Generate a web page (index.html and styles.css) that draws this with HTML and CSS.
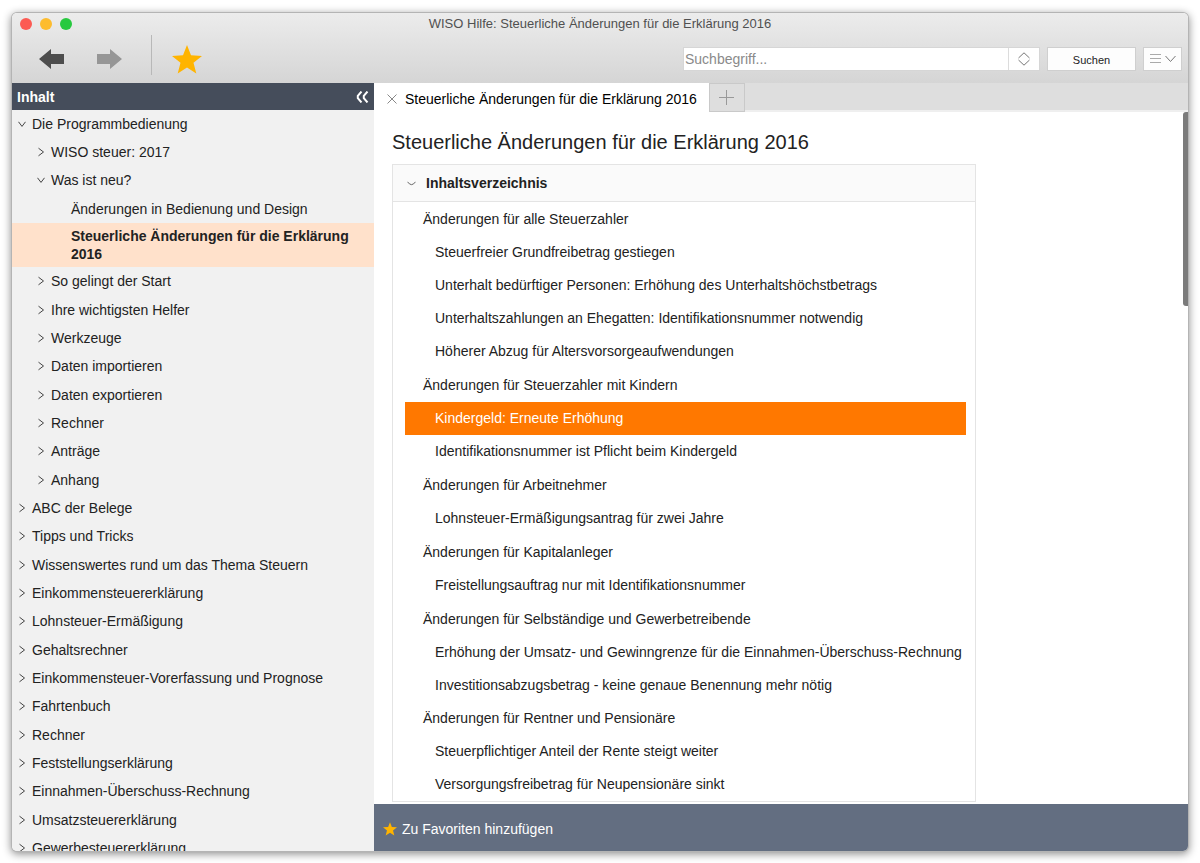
FILE: index.html
```
<!DOCTYPE html>
<html lang="de">
<head>
<meta charset="utf-8">
<title>WISO Hilfe: Steuerliche Änderungen für die Erklärung 2016</title>
<link rel="stylesheet" href="styles.css">
</head>
<body>
<svg class="defs" aria-hidden="true">
  <symbol id="right" viewBox="0 0 8 10"><path d="M1.5 1.2 6.5 5 1.5 8.8" fill="none" stroke="currentColor"/></symbol>
  <symbol id="down" viewBox="0 0 8 10"><path d="M.5 2.8 4 7.4 7.5 2.8" fill="none" stroke="currentColor"/></symbol>
  <symbol id="star" viewBox="0 0 30 29"><path d="M15 0 19 10.300 30 11 21.500 17.800 24.300 28.500 15 22.600 5.700 28.500 8.500 17.800 0 11 11 10.300Z" fill="#ffb400"/></symbol>
</svg>
<div class="window">
  <header class="chrome">
    <div class="titlebar">
      <div class="lights"><span class="light close"></span><span class="light minimize"></span><span class="light zoom"></span></div>
      <div class="title">WISO Hilfe: Steuerliche Änderungen für die Erklärung 2016</div>
    </div>
    <div class="toolbar">
      <button class="tool back" aria-label="Zurück"><svg width="25" height="20" viewBox="0 0 25 20"><path d="M0 10 12 0V5H25V15H12V20Z" fill="#4d4d4d"/></svg></button>
      <button class="tool forward" aria-label="Vorwärts"><svg width="25" height="20" viewBox="0 0 25 20"><path d="M25 10 13 0V5H0V15H13V20Z" fill="#969696"/></svg></button>
      <span class="divider"></span>
      <button class="tool favorite" aria-label="Favoriten"><svg width="30" height="29"><use href="#star"/></svg></button>
      <form class="search">
        <div class="field">
          <input type="text" placeholder="Suchbegriff..." aria-label="Suchbegriff">
          <button type="button" class="stepper" aria-label="Treffer wechseln"><svg width="12" height="14" viewBox="0 0 12 14"><path d="M.5 6 6 .8 11.500 6M.5 8 6 13.200 11.500 8" fill="none" stroke="#777"/></svg></button>
        </div>
        <button type="button" class="submit">Suchen</button>
        <button type="button" class="options" aria-label="Optionen"><svg width="26" height="12" viewBox="0 0 26 12"><path d="M0 1.500H11M0 5.500H11M0 9.500H11" stroke="#aaa" fill="none"/><path d="M15.500 3 20.500 8.500 25.500 3" stroke="#777" fill="none"/></svg></button>
      </form>
    </div>
  </header>
  <div class="body">
    <nav class="sidebar" aria-label="Inhalt">
      <div class="sidebar-head"><span>Inhalt</span><button aria-label="Einklappen"><svg width="13" height="12" viewBox="0 0 13 12"><path d="M5.500 .5 1.800 4.800V7.200L5.500 11.500M11.500 .5 7.800 4.800V7.200L11.500 11.500" fill="none" stroke="#fff" stroke-width="2"/></svg></button></div>
      <ul class="tree">
        <li><a href="#"><svg><use href="#down"/></svg>Die Programmbedienung</a></li>
        <li class="sub"><a href="#"><svg><use href="#right"/></svg>WISO steuer: 2017</a></li>
        <li class="sub"><a href="#"><svg><use href="#down"/></svg>Was ist neu?</a></li>
        <li class="leaf"><a href="#">Änderungen in Bedienung und Design</a></li>
        <li class="leaf selected"><a href="#">Steuerliche Änderungen für die Erklärung 2016</a></li>
        <li class="sub"><a href="#"><svg><use href="#right"/></svg>So gelingt der Start</a></li>
        <li class="sub"><a href="#"><svg><use href="#right"/></svg>Ihre wichtigsten Helfer</a></li>
        <li class="sub"><a href="#"><svg><use href="#right"/></svg>Werkzeuge</a></li>
        <li class="sub"><a href="#"><svg><use href="#right"/></svg>Daten importieren</a></li>
        <li class="sub"><a href="#"><svg><use href="#right"/></svg>Daten exportieren</a></li>
        <li class="sub"><a href="#"><svg><use href="#right"/></svg>Rechner</a></li>
        <li class="sub"><a href="#"><svg><use href="#right"/></svg>Anträge</a></li>
        <li class="sub"><a href="#"><svg><use href="#right"/></svg>Anhang</a></li>
        <li><a href="#"><svg><use href="#right"/></svg>ABC der Belege</a></li>
        <li><a href="#"><svg><use href="#right"/></svg>Tipps und Tricks</a></li>
        <li><a href="#"><svg><use href="#right"/></svg>Wissenswertes rund um das Thema Steuern</a></li>
        <li><a href="#"><svg><use href="#right"/></svg>Einkommensteuererklärung</a></li>
        <li><a href="#"><svg><use href="#right"/></svg>Lohnsteuer-Ermäßigung</a></li>
        <li><a href="#"><svg><use href="#right"/></svg>Gehaltsrechner</a></li>
        <li><a href="#"><svg><use href="#right"/></svg>Einkommensteuer-Vorerfassung und Prognose</a></li>
        <li><a href="#"><svg><use href="#right"/></svg>Fahrtenbuch</a></li>
        <li><a href="#"><svg><use href="#right"/></svg>Rechner</a></li>
        <li><a href="#"><svg><use href="#right"/></svg>Feststellungserklärung</a></li>
        <li><a href="#"><svg><use href="#right"/></svg>Einnahmen-Überschuss-Rechnung</a></li>
        <li><a href="#"><svg><use href="#right"/></svg>Umsatzsteuererklärung</a></li>
        <li><a href="#"><svg><use href="#right"/></svg>Gewerbesteuererklärung</a></li>
      </ul>
    </nav>
    <main class="main">
      <div class="tabs">
        <div class="tab"><button aria-label="Tab schließen"><svg width="10" height="10" viewBox="0 0 10 10"><path d="M.5 .5 9.500 9.500M9.500 .5 .5 9.500" stroke="#888"/></svg></button><span>Steuerliche Änderungen für die Erklärung 2016</span></div>
        <button class="add" aria-label="Neuer Tab"><svg width="15" height="15" viewBox="0 0 15 15"><path d="M7.500 0V15M0 7.500H15" stroke="#999"/></svg></button>
        <div class="tabs-rest"></div>
      </div>
      <div class="page">
        <article class="article">
          <h1>Steuerliche Änderungen für die Erklärung 2016</h1>
          <section class="toc">
            <h2><svg width="9" height="5" viewBox="0 0 9 5"><path d="M.5 .8Q4.500 6.500 8.500 .8" fill="none" stroke="#666"/></svg>Inhaltsverzeichnis</h2>
            <ul class="groups">
              <li><a href="#">Änderungen für alle Steuerzahler</a>
                <ul>
                  <li><a href="#">Steuerfreier Grundfreibetrag gestiegen</a></li>
                  <li><a href="#">Unterhalt bedürftiger Personen: Erhöhung des Unterhaltshöchstbetrags</a></li>
                  <li><a href="#">Unterhaltszahlungen an Ehegatten: Identifikationsnummer notwendig</a></li>
                  <li><a href="#">Höherer Abzug für Altersvorsorgeaufwendungen</a></li>
                </ul></li>
              <li><a href="#">Änderungen für Steuerzahler mit Kindern</a>
                <ul>
                  <li><a href="#" class="active">Kindergeld: Erneute Erhöhung</a></li>
                  <li><a href="#">Identifikationsnummer ist Pflicht beim Kindergeld</a></li>
                </ul></li>
              <li><a href="#">Änderungen für Arbeitnehmer</a>
                <ul><li><a href="#">Lohnsteuer-Ermäßigungsantrag für zwei Jahre</a></li></ul></li>
              <li><a href="#">Änderungen für Kapitalanleger</a>
                <ul><li><a href="#">Freistellungsauftrag nur mit Identifikationsnummer</a></li></ul></li>
              <li><a href="#">Änderungen für Selbständige und Gewerbetreibende</a>
                <ul>
                  <li><a href="#">Erhöhung der Umsatz- und Gewinngrenze für die Einnahmen-Überschuss-Rechnung</a></li>
                  <li><a href="#">Investitionsabzugsbetrag - keine genaue Benennung mehr nötig</a></li>
                </ul></li>
              <li><a href="#">Änderungen für Rentner und Pensionäre</a>
                <ul>
                  <li><a href="#">Steuerpflichtiger Anteil der Rente steigt weiter</a></li>
                  <li><a href="#">Versorgungsfreibetrag für Neupensionäre sinkt</a></li>
                </ul></li>
            </ul>
          </section>
        </article>
        <div class="scroll"><div class="thumb"></div></div>
      </div>
      <footer class="footer"><button><svg width="14" height="14"><use href="#star"/></svg>Zu Favoriten hinzufügen</button></footer>
    </main>
  </div>
</div>
</body>
</html>
```
FILE: styles.css
```
* { box-sizing: border-box; }
body {
  margin: 0;
  padding: 13px 12px 12px;
  height: 100vh;
  background: #fff;
  color: #222;
  font: 14px/18px "Liberation Sans", Arial, sans-serif;
}
button {
  font: inherit;
  color: inherit;
  background: none;
  border: 0;
  padding: 0;
  display: flex;
  align-items: center;
  justify-content: center;
}
a { color: inherit; text-decoration: none; }
ul { list-style: none; margin: 0; padding: 0; }
svg { display: block; flex: none; }
.defs { position: absolute; width: 0; height: 0; }

.window {
  height: 100%;
  display: flex;
  flex-direction: column;
  overflow: hidden;
  border-radius: 5px;
  background: #fff;
  box-shadow: 0 0 0 1px #b4b4b4, 0 2px 8px 1px rgba(0, 0, 0, .45);
}
.chrome {
  flex: none;
  height: 70px;
  background: linear-gradient(#ececec, #d5d5d5);
}
.titlebar { display: grid; grid-template-columns: 1fr auto 1fr; align-items: center; height: 22px; }
.lights { display: flex; gap: 8px; padding-left: 8px; }
.light { width: 12px; height: 12px; border-radius: 50%; }
.close { background: #fc5b53; }
.minimize { background: #fdbc2e; }
.zoom { background: #27c93f; }
.title { color: #505050; font-size: 13px; }
.toolbar { display: flex; align-items: center; height: 48px; padding: 0 6px 0 27px; }
.forward { margin-left: 33px; }
.divider { width: 1px; height: 40px; margin: -8px 20px 0 29px; background: #b8b8b8; }
.search { display: flex; flex: 1; gap: 7px; justify-content: flex-end; height: 24px; }
.field { display: flex; width: 357px; background: #fff; border: 1px solid #d6d6d6; }
.field input {
  flex: 1;
  min-width: 0;
  border: 0;
  padding: 0 1px;
  outline: 0;
  background: transparent;
  font: inherit;
}
.field input::placeholder { color: #8a8a8a; opacity: 1; }
.stepper { width: 31px; border-left: 1px solid #dcdcdc; }
.submit, .options { background: #fdfdfd; border: 1px solid #cfcfcf; }
.submit { width: 89px; font-size: 11px; padding-top: 2px; }
.options { width: 39px; }

.body { display: flex; flex: 1; min-height: 0; }
.sidebar {
  width: 362px;
  flex: none;
  display: flex;
  flex-direction: column;
  overflow: hidden;
  background: #f1f1f1;
}
.sidebar-head {
  display: flex;
  justify-content: space-between;
  align-items: center;
  flex: none;
  height: 27px;
  padding: 0 5px;
  background: #454d5b;
  color: #fff;
  font-weight: bold;
}
.tree li:nth-child(3n) { margin-bottom: 1px; }
.tree a { display: flex; align-items: center; min-height: 28px; padding-left: 6px; }
.tree svg { width: 8px; height: 10px; margin-right: 6px; color: #444; }
.tree .sub a { padding-left: 25px; }
.tree .leaf a { padding: 0 20px 0 59px; }
.tree .selected { background: #ffe1cb; font-weight: bold; }
.tree .selected a { min-height: 44px; }

.main { display: flex; flex-direction: column; flex: 1; min-width: 0; }
.tabs { display: flex; flex: none; height: 29px; color: #000; }
.tab { display: flex; align-items: center; gap: 8px; padding: 3px 12px 0 13px; }
.add { width: 36px; background: #dedede; border: 1px solid #c9c9c9; }
.tabs-rest { flex: 1; background: #dedede; border-bottom: 2px solid #efefef; }
.page { display: flex; flex: 1; min-height: 0; overflow: hidden; }
.article { flex: 1; padding: 16px 18px 3px; }
h1 { margin: 0 0 8px; font-size: 20px; line-height: 28px; font-weight: normal; }
.toc { max-width: 584px; border: 1px solid #e4e4e4; }
h2 {
  display: flex;
  align-items: center;
  gap: 10px;
  height: 37px;
  margin: 0;
  padding-left: 14px;
  font-size: 14px;
  background: #fafafa;
  border-bottom: 1px solid #e4e4e4;
}
.groups { padding: 1px 9px 0 12px; }
.groups > li + li:not(:last-child) { margin-top: 1px; }
.groups a { display: block; padding-left: 18px; line-height: 33px; }
.groups ul a { padding-left: 30px; }
.groups .active { background: #ff7800; color: #fff; }
.scroll { width: 5px; flex: none; }
.thumb { height: 194px; background: #7b7b7b; border-radius: 3px 0 0 3px; }
.footer { flex: none; display: flex; align-items: center; height: 47px; padding: 2px 9px 0; background: #636e81; color: #fff; }
.footer button { gap: 5px; }
```
